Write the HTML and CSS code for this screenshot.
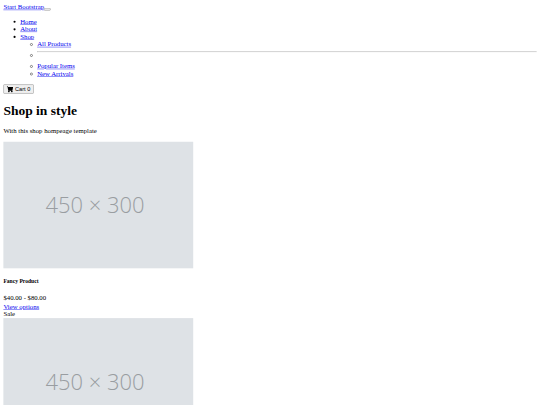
FILE: index.html
```html
<!doctype html>
<html lang="en">
<head>
    <meta charset="UTF-8">
    <meta name="viewport" content="width=device-width, initial-scale=1.0">
    <title>Shop Homepage</title>
    <link rel="stylesheet" href="styles.css">
</head>
<body>
    <div class="page">
        <nav>
            <div>
                <a href="#">Start Bootstrap</a><button type="button" class="toggler"><span></span></button>
                <ul>
                    <li><a href="#">Home</a></li>
                    <li><a href="#">About</a></li>
                    <li>
                        <a href="#">Shop</a>
                        <ul>
                            <li><a href="#">All Products</a></li>
                            <li><hr></li>
                            <li><a href="#">Popular Items</a></li>
                            <li><a href="#">New Arrivals</a></li>
                        </ul>
                    </li>
                </ul>
                <form>
                    <button type="button" class="cart">
                        <svg class="cart__icon" viewBox="0 0 16 16" aria-hidden="true">
                            <path d="M0 1.5A.5.5 0 0 1 .5 1H2a.5.5 0 0 1 .485.379L2.89 3H14.5a.5.5 0 0 1 .491.592l-1.5 8A.5.5 0 0 1 13 12H4a.5.5 0 0 1-.491-.408L2.01 3.607 1.61 2H.5a.5.5 0 0 1-.5-.5zM5 12a2 2 0 1 0 0 4 2 2 0 0 0 0-4zm7 0a2 2 0 1 0 0 4 2 2 0 0 0 0-4z"/>
                        </svg>
                        Cart <span>0</span>
                    </button>
                </form>
            </div>
        </nav>

        <header>
            <h1>Shop in style</h1>
            <p>With this shop hompeage template</p>
        </header>

        <section>
            <div class="product">
                <div class="placeholder">450 × 300</div>
                <h5>Fancy Product</h5>
                <div class="price">$40.00 - $80.00</div>
                <div><a href="#">View options</a></div>
            </div>
            <div class="product">
                <div>Sale</div>
                <div class="placeholder">450 × 300</div>
            </div>
        </section>
    </div>
</body>
</html>
```

FILE: styles.css
```css
html,
body {
    overflow: hidden;
}

body {
    margin: 0;
    height: 405px;
}

.page {
    box-sizing: border-box;
    width: 1280px;
    height: 960px;
    padding: 8px;
    overflow: hidden;
    transform: scale(0.421875);
    transform-origin: 0 0;
    font-family: "Liberation Serif", serif;
}

.cart {
    font-family: "Liberation Sans", sans-serif;
}

.cart__icon {
    width: 16px;
    height: 16px;
    vertical-align: -3px;
}

.price {
    margin-bottom: 4px;
}

.placeholder {
    box-sizing: border-box;
    width: 450px;
    height: 300px;
    padding-right: 16px;
    display: flex;
    align-items: center;
    justify-content: center;
    background-color: #dee2e6;
    color: #999da1;
    font-family: "Open Sans", sans-serif;
    font-weight: 300;
    font-size: 52px;
}
```
